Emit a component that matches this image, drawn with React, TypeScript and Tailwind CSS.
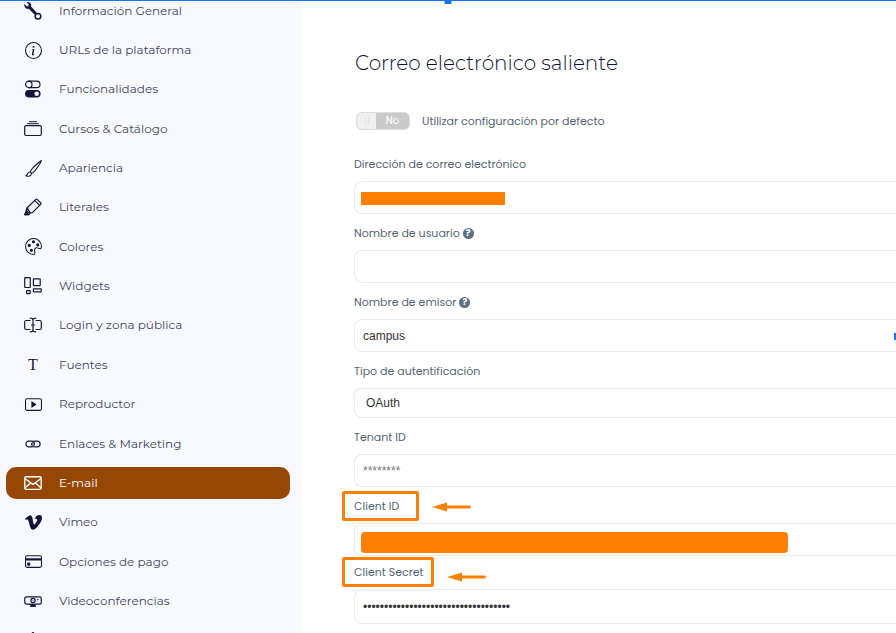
import { useState } from "react";
import type { ReactNode } from "react";
import {
  BsInfoCircle,
  BsBrush,
  BsPalette,
  BsPlayBtn,
  BsVimeo,
  BsCreditCard,
} from "react-icons/bs";
import clsx from "clsx";

function Svg({ children }: { children: ReactNode }) {
  return (
    <svg viewBox="0 0 18 18" className="size-[18px]" fill="none" stroke="currentColor" strokeWidth="1.2" strokeLinejoin="round" strokeLinecap="round">
      {children}
    </svg>
  );
}

const wrench = (
  <Svg>
    <path d="M.6 2.600 2.800 4.600 4.600 4.200 5 2.400 3 .4C6 .1 7.600 2.200 6.900 4.600L12.600 10.800 11 12.800 4.900 6.700C2.400 7.400.200 5.600.6 2.600Z" fill="currentColor" strokeWidth=".4" />
    <circle cx="14" cy="14.200" r="2.800" strokeWidth="1.500" />
  </Svg>
);

const toggles = (
  <Svg>
    <rect x="1.600" y="1.200" width="14.400" height="6.400" rx="3.200" />
    <path d="M4.800 1.200c4.300 0 4.300 6.400 0 6.400" />
    <rect x="1.600" y="10.600" width="14.400" height="6.400" rx="3.200" fill="currentColor" />
    <circle cx="12.700" cy="13.800" r="2.300" fill="#f8f9fe" stroke="none" />
  </Svg>
);

const collection = (
  <Svg>
    <path d="M5.500 1.700h7M3.500 3.700h11" strokeWidth="1" />
    <rect x=".7" y="5.700" width="16.600" height="9.800" rx="1.200" />
  </Svg>
);

const marker = (
  <Svg>
    <path d="M3.200 9.800 11.600 1.600a1.300 1.300 0 0 1 1.800 0l3.200 3a1.300 1.300 0 0 1 0 1.800L8.400 14.600 4.800 15 2.900 13.200z" />
    <path d="M10.800 2.600l4.900 4.800" />
    <path d="M3.200 9.800 .8 16.700H5l1.200-1.800z" />
    <path d="M2.400 13.400.8 16.700h3.400z" fill="currentColor" />
  </Svg>
);

const widgets = (
  <Svg>
    <rect x=".7" y=".7" width="5.600" height="9.800" rx=".4" />
    <rect x="9.400" y="1.800" width="6.800" height="6.800" rx=".4" />
    <rect x="2.600" y="13.600" width="3.600" height="3" rx=".4" />
    <rect x="9.400" y="11.900" width="7.800" height="2.900" rx=".4" />
  </Svg>
);

const cursorBox = (
  <Svg>
    <path d="M6 4.500H2.200A1.500 1.500 0 0 0 .7 6v6a1.500 1.500 0 0 0 1.500 1.500H6M12 4.500h3.800A1.500 1.500 0 0 1 17.300 6v6a1.500 1.500 0 0 1-1.500 1.500H12" />
    <path d="M6.200 2.200C7.800 2.200 9 2.800 9 4c0-1.200 1.200-1.800 2.800-1.800M9 4v10M6.200 15.800C7.800 15.800 9 15.200 9 14c0 1.200 1.200 1.800 2.800 1.800M7.500 9h3" />
  </Svg>
);

const link = (
  <Svg>
    <path d="M8 11.900H4.800a2.900 2.900 0 0 1 0-5.800H7.500c1.800 0 2.900 1.200 2.900 2.800 0 .8-.4 1.300-1.200 1.300" />
    <path d="M10 6.100h3.200a2.900 2.900 0 0 1 0 5.800H10.500c-1.800 0-2.900-1.200-2.900-2.800 0-.8.400-1.300 1.200-1.300" />
  </Svg>
);

const envelope = (
  <Svg>
    <rect x=".8" y="2.800" width="16.400" height="12.600" rx="1.300" strokeWidth="1.400" />
    <path d="M1.500 5 9 10.400 16.500 5M1.500 13.600l5-4.600M16.500 13.600l-5-4.600" strokeWidth="1.300" />
  </Svg>
);

const webcam = (
  <Svg>
    <path d="M6.500 12.200H2.200A1.400 1.400 0 0 1 .8 10.800V6.200a1.400 1.400 0 0 1 1.400-1.400h13.600a1.400 1.400 0 0 1 1.400 1.400v4.600a1.400 1.400 0 0 1-1.400 1.400h-4.300" />
    <circle cx="9" cy="8.500" r="2.100" />
    <circle cx="9" cy="8.500" r=".5" fill="currentColor" stroke="none" />
    <path d="M13.600 7.600h.4" />
    <path d="M7 12h4v1.500l1 .9H6l1-.9z" fill="currentColor" strokeWidth=".8" />
  </Svg>
);

const badge = (
  <Svg>
    <path d="M6.500 3.500 9 1.500l2.500 2v9h-5z" fill="currentColor" />
  </Svg>
);

const items: { label: string; icon: ReactNode }[] = [
  { label: "Información General", icon: wrench },
  { label: "URLs de la plataforma", icon: <BsInfoCircle /> },
  { label: "Funcionalidades", icon: toggles },
  { label: "Cursos & Catálogo", icon: collection },
  { label: "Apariencia", icon: <BsBrush /> },
  { label: "Literales", icon: marker },
  { label: "Colores", icon: <BsPalette /> },
  { label: "Widgets", icon: widgets },
  { label: "Login y zona pública", icon: cursorBox },
  { label: "Fuentes", icon: <span aria-hidden="true" className="font-['Liberation_Serif',serif] text-base">T</span> },
  { label: "Reproductor", icon: <BsPlayBtn /> },
  { label: "Enlaces & Marketing", icon: link },
  { label: "E-mail", icon: envelope },
  { label: "Vimeo", icon: <BsVimeo /> },
  { label: "Opciones de pago", icon: <BsCreditCard /> },
  { label: "Videoconferencias", icon: webcam },
  { label: "", icon: badge },
];

const control =
  "block w-full rounded-l-lg border border-r-0 border-[#e9e9ea] bg-white px-2 font-['Liberation_Sans',Arial,sans-serif] text-xs text-[#333] outline-none placeholder:text-[#777]";

function Help() {
  return (
    <span title="Ayuda" className="flex size-[11px] items-center justify-center rounded-full bg-[#5c7080] text-[9px] font-bold leading-none text-white">
      ?
    </span>
  );
}

function Arrow({ className }: { className: string }) {
  return (
    <svg viewBox="0 0 40 10" className={clsx("absolute left-full ml-4 h-[10px] w-10", className)} aria-hidden="true">
      <path d="M0 5 15 .5v9z" fill="#ff8000" />
      <path d="M13 5h24.500" stroke="#ff8000" strokeWidth="3" strokeLinecap="round" />
    </svg>
  );
}

type FieldProps = {
  id: string;
  label: string;
  help?: boolean;
  mark?: string;
  arrow?: string;
  children: ReactNode;
};

function Field({ id, label, help, mark, arrow = "top-2", children }: FieldProps) {
  return (
    <div>
      <div className="mb-[9px] flex h-4 items-center gap-[3px]">
        <label htmlFor={id} className="relative whitespace-nowrap">
          {label}
          {mark && (
            <span className={clsx("absolute -left-3 -inset-y-[7px] rounded-xs border-3 border-[#ff8000]", mark)}>
              <Arrow className={arrow} />
            </span>
          )}
        </label>
        {help && <Help />}
      </div>
      {children}
    </div>
  );
}

export default function App() {
  const [useDefault, setUseDefault] = useState(false);
  return (
    <div className="relative flex h-screen overflow-hidden bg-white font-[Montserrat,Inter,sans-serif]">
      <aside className="w-[301px] shrink-0 bg-[#f8f9fe]">
        <nav className="-mt-[9px]">
          <ul className="grid h-[669px] auto-rows-fr pl-1.5 pr-[11px]">
            {items.map(({ label, icon }) => (
              <li key={label} className="flex items-center">
                <a
                  href="#"
                  aria-current={label === "E-mail" ? "page" : undefined}
                  className={clsx(
                    "flex h-8 w-full items-center gap-[17px] rounded-[10px] pl-[18px] text-xs",
                    label === "E-mail" ? "bg-[#964706] text-white" : "text-[#3f4560]",
                  )}
                >
                  <span className={clsx("flex w-[18px] justify-center text-[17px]", label !== "E-mail" && "text-[#12173a]")}>{icon}</span>
                  {label}
                </a>
              </li>
            ))}
          </ul>
        </nav>
      </aside>

      <main className="min-w-0 flex-1 pl-[53px] pt-[49px]">
        <h1 className="pl-px text-xl font-light leading-7 text-[#0c1030]">Correo electrónico saliente</h1>
        <form className="mt-[35px] font-[Poppins,Inter,sans-serif] text-[11px] font-normal leading-4 text-[#526474]">
          <label className="flex h-[18px] items-center gap-3 pl-0.5">
            <input type="checkbox" role="switch" className="sr-only" checked={useDefault} onChange={(e) => setUseDefault(e.target.checked)} />
            <span className="flex h-[18px] w-[54px] overflow-hidden rounded-md border border-[#dcdcdc] bg-[#cacaca]">
              <span className="flex w-[19px] items-center justify-center gap-0.5 bg-[#efefef]">
                <span className="h-2 w-px bg-[#e2e2e2]" />
                <span className="h-2 w-px bg-[#e2e2e2]" />
              </span>
              <span className="flex flex-1 items-center justify-center text-[10px] text-white">{useDefault ? "Sí" : "No"}</span>
            </span>
            Utilizar configuración por defecto
          </label>

          <div className="mt-[26px] flex flex-col gap-[11px]">
            <Field id="address" label="Dirección de correo electrónico">
              <div className="relative">
                <input id="address" type="email" className={clsx(control, "h-[33px]")} />
                <span className="absolute left-[7px] top-[11px] h-[13px] w-36 bg-[#ff8000]" />
              </div>
            </Field>
            <Field id="user" label="Nombre de usuario" help>
              <input id="user" className={clsx(control, "h-[33px]")} />
            </Field>
            <Field id="sender" label="Nombre de emisor" help>
              <input id="sender" defaultValue="campus" className={clsx(control, "h-[33px]")} />
            </Field>
            <Field id="auth" label="Tipo de autentificación">
              <select id="auth" className={clsx(control, "h-[30px] appearance-none indent-[3px]")}>
                <option>OAuth</option>
              </select>
            </Field>
            <Field id="tenant" label="Tenant ID">
              <input id="tenant" placeholder="********" className={clsx(control, "h-[33px]")} />
            </Field>
            <Field id="client" label="Client ID" mark="-right-5">
              <div className="relative">
                <input id="client" className={clsx(control, "h-[33px]")} />
                <span className="absolute left-[7px] top-[9px] h-[21px] w-[427px] rounded-sm bg-[#ff8000]" />
              </div>
            </Field>
            <div className="-mt-[3px]">
              <Field id="secret" label="Client Secret" mark="-right-2.5" arrow="top-3">
                <input id="secret" type="password" defaultValue="abcdefghijklmnopqrstuvwxyz012345678" className={clsx(control, "h-[35px]")} />
              </Field>
            </div>
          </div>
        </form>
      </main>

      <div className="pointer-events-none absolute inset-0 border-t border-[#1a73e8]">
        <span className="absolute -top-1 left-1/2 h-[7px] w-[7px] -translate-x-1/2 bg-[#1a73e8]" />
        <span className="absolute -right-[5px] top-[332px] h-[7px] w-[7px] bg-[#1a73e8]" />
      </div>
    </div>
  );
}
